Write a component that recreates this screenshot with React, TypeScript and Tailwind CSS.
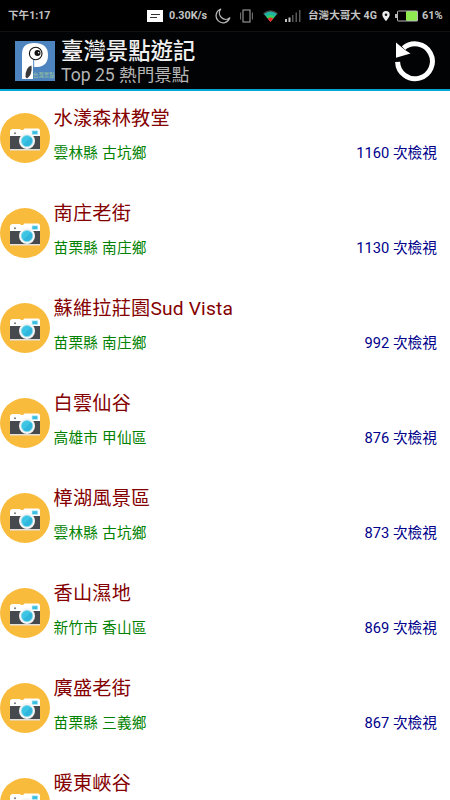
interface Spot {
  name: string;
  area?: string;
  views?: number;
}

const spots: Spot[] = [
  { name: '水漾森林教堂', area: '雲林縣 古坑鄉', views: 1160 },
  { name: '南庄老街', area: '苗栗縣 南庄鄉', views: 1130 },
  { name: '蘇維拉莊園Sud Vista', area: '苗栗縣 南庄鄉', views: 992 },
  { name: '白雲仙谷', area: '高雄市 甲仙區', views: 876 },
  { name: '樟湖風景區', area: '雲林縣 古坑鄉', views: 873 },
  { name: '香山濕地', area: '新竹市 香山區', views: 869 },
  { name: '廣盛老街', area: '苗栗縣 三義鄉', views: 867 },
  { name: '暖東峽谷' },
];

function StatusBar() {
  return (
    <div className="flex h-[31px] shrink-0 items-center bg-black pl-2 text-[11px] leading-4 font-bold text-[#c4c4c4]">
      <span className="w-[139px] text-[10.6px] whitespace-nowrap">下午1:17</span>

      <svg className="h-3 w-4" viewBox="0 0 16 12">
        <rect width="16" height="12" fill="#fff" />
        <path d="M4 4.5h9M3 7.5h7" stroke="#333" strokeWidth="1" />
      </svg>
      <span className="ml-1.5 w-[38px] text-[10.8px] whitespace-nowrap">0.30K/s</span>

      <svg className="ml-2 h-4 w-4" viewBox="0 0 16 16" fill="none">
        <path
          d="M5.7 1.2A7 7 0 1 0 14.8 9.8A6.3 6.3 0 0 1 5.7 1.2Z"
          stroke="#b5b5b5"
          strokeWidth="1.3"
          strokeLinejoin="round"
        />
      </svg>

      <svg className="ml-[9px] h-3.5 w-[13px]" viewBox="0 0 13 14" fill="none">
        <rect x="3" y="1" width="7" height="12" stroke="#919191" strokeWidth="1.2" />
        <path d="M.6 3.5v7M12.4 3.5v7" stroke="#777" strokeWidth="1" />
      </svg>

      {/* Wifi */}
      <svg className="ml-2.5 h-3 w-[15px]" viewBox="0 0 15 12">
        <path d="M0 3.2Q7.5-2.6 15 3.2L7.5 12Z" fill="#454545" />
        <path d="M1 4Q7.5-1 14 4L7.5 11.5Z" fill="#20b5a0" />
        <path d="M3.3 6.6Q7.5 3.6 11.7 6.6L7.5 11.5Z" fill="#35cf60" />
        <path d="M4.7 8.7Q7.5 6.4 10.3 8.7L7.5 12Z" fill="#e92a2a" />
      </svg>

      <svg className="ml-[7px] h-3 w-4" viewBox="0 0 16 12">
        <path d="M0 9h2v3H0zM3.5 7.5h2V12h-2z" fill="#c4c4c4" />
        <path d="M7 5h1.5v7H7zM10.5 2.5H12V12h-1.5zM14 0h1.5v12H14z" fill="#575757" />
      </svg>

      <span className="ml-[7px] w-[70px] whitespace-nowrap text-[10.6px]">
        台灣大哥大 4G
      </span>

      <svg className="ml-1 h-2.5 w-2" viewBox="0 0 8 10">
        <path
          d="M4 0A3.7 3.7 0 0 0 .3 3.7C.3 6.2 4 10 4 10s3.7-3.8 3.7-6.3A3.7 3.7 0 0 0 4 0Z"
          fill="#ececec"
        />
        <circle cx="4" cy="3.8" r="1.3" fill="#111" />
      </svg>

      {/* Battery */}
      <svg className="ml-[5px] h-3 w-6" viewBox="0 0 24 12">
        <path d="M0 4h2V2Q2 .5 4 .5h17.5Q23 .5 23 2v8q0 1.5-1.5 1.5H4Q2 11.5 2 10V8H0Z" fill="#b9b9b9" />
        <rect x="3" y="1.5" width="8.5" height="9" fill="#000" />
        <rect x="11" y="1.5" width="11" height="9" fill="#8fec50" />
      </svg>
      <span className="ml-[3px] whitespace-nowrap text-[11px]">61%</span>
    </div>
  );
}

function AppLogo() {
  return (
    <svg className="h-10 w-10 shrink-0" viewBox="0 0 40 40">
      <rect width="40" height="40" fill="#4d84c0" />
      <path
        d="M7 38V13Q7 2 19 2Q33 2 33 14Q33 25.5 22 26H18V38Z"
        fill="#fff"
      />
      <path d="M18.7 18v9" stroke="#4d84c0" strokeWidth="1" />
      <circle cx="20.7" cy="12.5" r="6.3" fill="#fff" stroke="#111" strokeWidth="1.1" />
      <circle cx="22.5" cy="12" r="3" fill="#111" />
      <circle cx="23.6" cy="11.7" r=".8" fill="#fff" />
      <path d="M16.5 24.5Q10.5 26 10.5 36L12 37.5Q17.5 34 16.5 24.5Z" fill="#3a3a3a" />
      <text
        x="18"
        y="36"
        fontSize="5.4"
        fill="#a6cf96"
        fontFamily="Noto Sans CJK TC, sans-serif"
      >
        台灣景點
      </text>
    </svg>
  );
}

function CameraIcon() {
  return (
    <svg className="h-[50px] w-[50px] shrink-0" viewBox="0 0 50 50">
      <circle cx="25" cy="25" r="25" fill="#f9bb3c" />
      <path d="M10 17.5 12 16h8l1 1h2l1.5-1.5h14L40 17v7H10Z" fill="#fff" />
      <rect x="10" y="23" width="30" height="13.5" fill="#46494d" />
      <rect x="10" y="36" width="30" height="1.5" fill="#e6e0da" />
      <rect x="32" y="17.8" width="5.8" height="3.8" fill="#38bfe1" stroke="#c8eef6" strokeWidth=".7" />
      <circle cx="15" cy="20.3" r="1" fill="#777" />
      <circle cx="27" cy="28" r="8" fill="#f5f5f5" />
      <circle cx="27" cy="28" r="5.6" fill="#3cc4e4" stroke="#85d9ea" strokeWidth=".8" />
      <path d="M23.2 31.8 30.8 24.2A5.4 5.4 0 0 1 23.2 31.8Z" fill="#30b6dc" />
    </svg>
  );
}

function Header() {
  return (
    <header className="flex h-[60px] shrink-0 items-center border-t border-b-2 border-t-[#111] border-b-[#05a5d5] bg-[#020304] pr-3.5 pl-[15px]">
      <AppLogo />
      <div className="ml-[6px] flex-1 pt-[5px] whitespace-nowrap">
        <h1 className="text-[22.4px] leading-[25px] font-medium text-[#f0f0f0]">臺灣景點遊記</h1>
        <p className="text-[17.6px] leading-[23px] text-[#b5b5b5]">Top 25 熱門景點</p>
      </div>
      <svg className="h-[42px] w-[42px]" viewBox="0 0 42 42">
        <path
          d="M3.6 21.8A17.4 17.4 0 1 0 9.5 8.2"
          fill="none"
          stroke="#fff"
          strokeWidth="5"
        />
        <path d="M2 2.5 2 17.8 16.5 13.6 11 10Z" fill="#fff" />
      </svg>
    </header>
  );
}

function SpotRow({ spot }: { spot: Spot }) {
  return (
    <li className="flex h-[95px] shrink-0 items-start pt-[22px]">
      <CameraIcon />
      <div className="-mt-2.5 ml-[3.5px] flex-1 pr-[13px]">
        <h2 className="text-[19.2px] leading-8 tracking-[0.01em] text-[#850000]">{spot.name}</h2>
        {spot.area && (
          <div className="mt-1.5 flex justify-between text-[14.7px] leading-6">
            <span className="tracking-[0.2px] text-[#008200]">{spot.area}</span>
            <span className="text-[#00008b]">{spot.views} 次檢視</span>
          </div>
        )}
      </div>
    </li>
  );
}

export default function App() {
  return (
    <div className="flex h-[800px] w-[450px] flex-col overflow-hidden bg-white font-[Roboto,'Noto_Sans_CJK_TC',sans-serif]">
      <StatusBar />
      <Header />
      <ul className="flex flex-1 flex-col overflow-hidden">
        {spots.map((spot) => (
          <SpotRow key={spot.name} spot={spot} />
        ))}
      </ul>
    </div>
  );
}
